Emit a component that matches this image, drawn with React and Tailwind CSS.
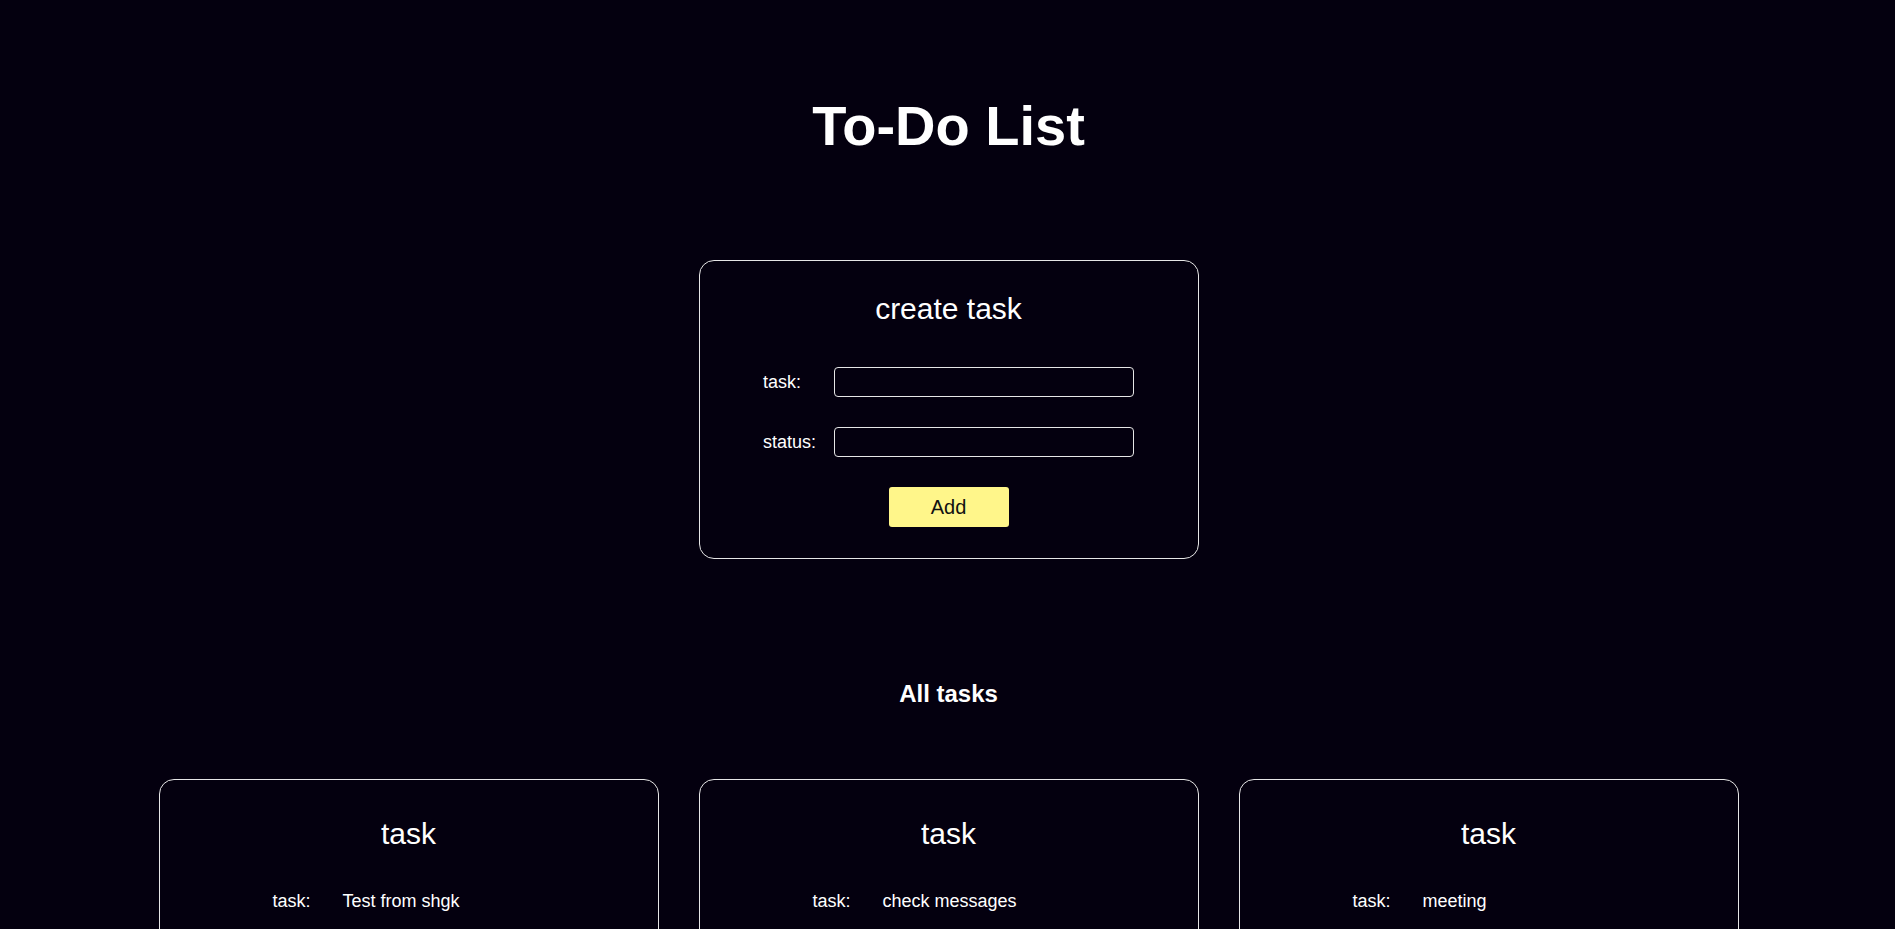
import { useState } from "react"

const tasks = [
  { task: "Test from shgk" },
  { task: "check messages" },
  { task: "meeting" },
]

export default function App() {
  const [task, setTask] = useState("")
  const [status, setStatus] = useState("")

  return (
    <div
      className="h-screen overflow-hidden bg-[#04000f] text-white flex flex-col items-center pl-[2px]"
      style={{ fontFamily: '"Liberation Sans", Arial, sans-serif' }}
    >
      {/* Title */}
      <h1 className="mt-[94px] text-[56px] leading-[64px] font-bold">To-Do List</h1>

      {/* Create task form */}
      <div className="mt-[102px] w-[500px] border border-[#e6e6e6] rounded-[15px] flex flex-col items-center pt-[31px] pb-[31px]">
        <h2 className="text-[30px] leading-[34px]">create task</h2>

        <div className="mt-[41px] flex items-center w-[371px] h-[30px]">
          <label className="w-[71px] text-[18px]">task:</label>
          <input
            value={task}
            onChange={(e) => setTask(e.target.value)}
            className="w-[300px] h-[30px] bg-transparent border border-[#e6e6e6] rounded-[4px] px-2 text-white outline-none"
          />
        </div>

        <div className="mt-[30px] flex items-center w-[371px] h-[30px]">
          <label className="w-[71px] text-[18px]">status:</label>
          <input
            value={status}
            onChange={(e) => setStatus(e.target.value)}
            className="w-[300px] h-[30px] bg-transparent border border-[#e6e6e6] rounded-[4px] px-2 text-white outline-none"
          />
        </div>

        <button className="mt-[30px] w-[120px] h-[40px] bg-[#fff68a] text-[#111] text-[20px] rounded-[3px]">
          Add
        </button>
      </div>

      {/* All tasks */}
      <h2 className="mt-[121px] text-[24px] leading-[28px] font-bold">All tasks</h2>

      <div className="mt-[71px] flex gap-[40px] shrink-0">
        {tasks.map((t, i) => (
          <div
            key={i}
            className="w-[500px] h-[300px] border border-[#e6e6e6] rounded-[15px] flex flex-col items-center pt-[37px]"
          >
            <h3 className="text-[30px] leading-[34px]">task</h3>
            <div className="mt-[40px] flex w-[272px] text-[18px] leading-[21px]">
              <span className="w-[70px]">task:</span>
              <span>{t.task}</span>
            </div>
          </div>
        ))}
      </div>
    </div>
  )
}
